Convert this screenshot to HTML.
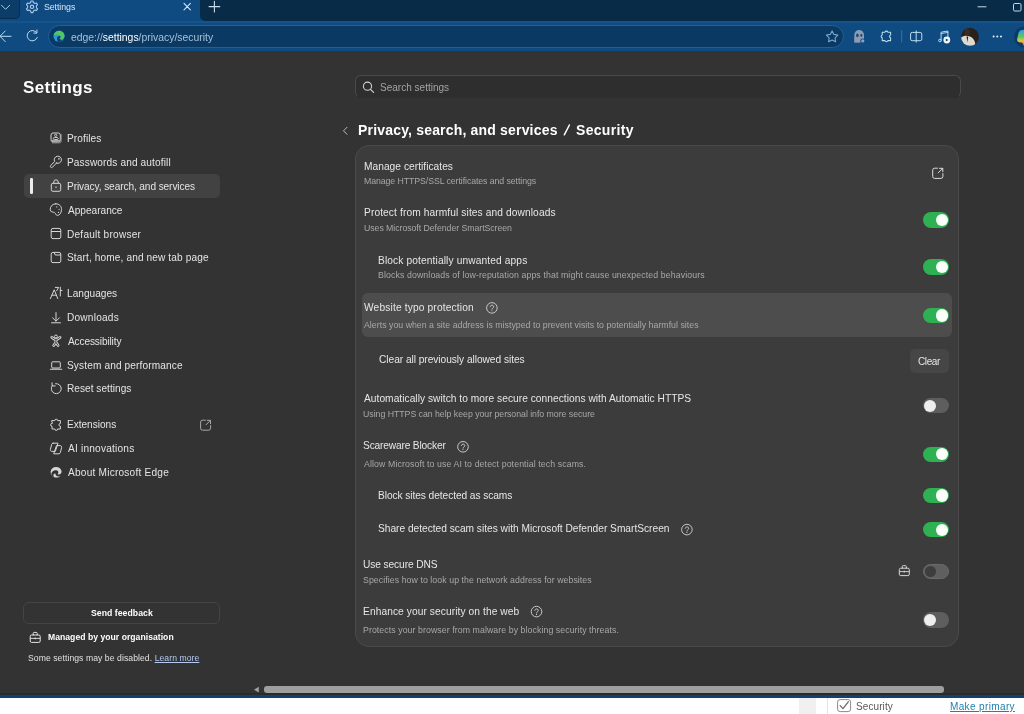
<!DOCTYPE html>
<html><head><meta charset="utf-8">
<style>
*{box-sizing:border-box;margin:0;padding:0}
html,body{width:1024px;height:714px;overflow:hidden;background:#333333;font-family:"Liberation Sans", sans-serif;position:relative}
.a{position:absolute}
.t{position:absolute;white-space:nowrap;line-height:1;will-change:transform}
svg{position:absolute;overflow:visible}
</style></head><body>
<div class="a" style="left:0px;top:0px;width:1024px;height:51px;background:#0f4a80;"></div>
<div class="a" style="left:199.5px;top:0px;width:824.5px;height:21px;background:#082c48;border-bottom-left-radius:5px"></div>
<div class="a" style="left:0px;top:0px;width:19.5px;height:19px;background:#0c3c68;border-bottom-right-radius:5px;border-right:1px solid #072c50;border-bottom:1px solid #072c50"></div>
<div class="a" style="left:0px;top:21px;width:1024px;height:1.5px;background:#15548a;"></div>
<div class="a" style="left:47.6px;top:24.6px;width:796px;height:23.2px;background:#0a3964;border-radius:12px;border:1px solid #21609a"></div>
<div class="t" style="left:43.60px;top:3px;font-size:8.8px;color:#d6e6f5;font-weight:normal;letter-spacing:-0.071px;">Settings</div>
<div class="t" style="left:71.20px;top:33px;font-size:10.4px;color:#a6c0d8;font-weight:normal;letter-spacing:0.000px;">edge://<span style="color:#fff">settings</span>/privacy/security</div>
<div class="a" style="left:0px;top:51px;width:1024px;height:644px;background:#333333;"></div>
<div class="t" style="left:22.80px;top:79px;font-size:17px;color:#ffffff;font-weight:bold;letter-spacing:0.343px;">Settings</div>
<div class="a" style="left:24px;top:174px;width:196px;height:24px;background:#424242;border-radius:5px"></div>
<div class="a" style="left:30.3px;top:178px;width:2.7px;height:15.5px;background:#ececec;border-radius:1.3px"></div>
<div class="t" style="left:66.80px;top:134px;font-size:10.1px;color:#e4e4e4;font-weight:normal;letter-spacing:0.100px;">Profiles</div>
<div class="t" style="left:66.80px;top:158px;font-size:10.1px;color:#e4e4e4;font-weight:normal;letter-spacing:0.129px;">Passwords and autofill</div>
<div class="t" style="left:66.80px;top:182px;font-size:10.1px;color:#e4e4e4;font-weight:normal;letter-spacing:-0.089px;">Privacy, search, and services</div>
<div class="t" style="left:67.80px;top:206px;font-size:10.1px;color:#e4e4e4;font-weight:normal;letter-spacing:0.000px;">Appearance</div>
<div class="t" style="left:66.80px;top:230px;font-size:10.1px;color:#e4e4e4;font-weight:normal;letter-spacing:0.229px;">Default browser</div>
<div class="t" style="left:66.80px;top:253px;font-size:10.1px;color:#e4e4e4;font-weight:normal;letter-spacing:0.125px;">Start, home, and new tab page</div>
<div class="t" style="left:66.80px;top:289px;font-size:10.1px;color:#e4e4e4;font-weight:normal;letter-spacing:0.013px;">Languages</div>
<div class="t" style="left:66.80px;top:313px;font-size:10.1px;color:#e4e4e4;font-weight:normal;letter-spacing:0.225px;">Downloads</div>
<div class="t" style="left:67.80px;top:337px;font-size:10.1px;color:#e4e4e4;font-weight:normal;letter-spacing:-0.125px;">Accessibility</div>
<div class="t" style="left:66.80px;top:361px;font-size:10.1px;color:#e4e4e4;font-weight:normal;letter-spacing:0.138px;">System and performance</div>
<div class="t" style="left:66.80px;top:384px;font-size:10.1px;color:#e4e4e4;font-weight:normal;letter-spacing:0.031px;">Reset settings</div>
<div class="t" style="left:66.80px;top:420px;font-size:10.1px;color:#e4e4e4;font-weight:normal;letter-spacing:-0.022px;">Extensions</div>
<div class="t" style="left:67.80px;top:444px;font-size:10.1px;color:#e4e4e4;font-weight:normal;letter-spacing:0.215px;">AI innovations</div>
<div class="t" style="left:67.80px;top:468px;font-size:10.1px;color:#e4e4e4;font-weight:normal;letter-spacing:0.226px;">About Microsoft Edge</div>
<div class="a" style="left:354.5px;top:75px;width:606.5px;height:23px;background:#2e2e2e;border:1px solid #4a4a4a;border-bottom-color:#2e2e2e;border-radius:6px;box-sizing:border-box"></div>
<div class="t" style="left:379.80px;top:83px;font-size:10px;color:#a3a3a3;font-weight:normal;letter-spacing:0.014px;">Search settings</div>
<div class="t" style="left:357.80px;top:123px;font-size:14px;color:#ffffff;font-weight:bold;letter-spacing:0.182px;">Privacy, search, and services</div>
<div class="t" style="left:575.60px;top:123px;font-size:14px;color:#ffffff;font-weight:bold;letter-spacing:0.314px;">Security</div>
<div class="a" style="left:355px;top:145px;width:604px;height:502px;background:#3c3c3c;border:1px solid #4b4b4b;border-radius:14px;box-sizing:border-box"></div>
<div class="a" style="left:361.5px;top:293px;width:590.5px;height:44px;background:#4d4d4d;border-radius:6px"></div>
<div class="t" style="left:363.80px;top:162px;font-size:10.2px;color:#e6e6e6;font-weight:normal;letter-spacing:0.033px;">Manage certificates</div>
<div class="t" style="left:363.80px;top:177px;font-size:8.75px;color:#a8a8a8;font-weight:normal;letter-spacing:-0.076px;">Manage HTTPS/SSL certificates and settings</div>
<div class="t" style="left:363.80px;top:208px;font-size:10.2px;color:#e6e6e6;font-weight:normal;letter-spacing:0.105px;">Protect from harmful sites and downloads</div>
<div class="t" style="left:363.80px;top:224px;font-size:8.75px;color:#a8a8a8;font-weight:normal;letter-spacing:-0.053px;">Uses Microsoft Defender SmartScreen</div>
<div class="t" style="left:378.00px;top:256px;font-size:10.2px;color:#e6e6e6;font-weight:normal;letter-spacing:0.123px;">Block potentially unwanted apps</div>
<div class="t" style="left:378.00px;top:271px;font-size:8.75px;color:#a8a8a8;font-weight:normal;letter-spacing:0.110px;">Blocks downloads of low-reputation apps that might cause unexpected behaviours</div>
<div class="t" style="left:364.20px;top:303px;font-size:10.2px;color:#e6e6e6;font-weight:normal;letter-spacing:0.155px;">Website typo protection</div>
<div class="t" style="left:364.20px;top:321px;font-size:8.75px;color:#a8a8a8;font-weight:normal;letter-spacing:0.027px;">Alerts you when a site address is mistyped to prevent visits to potentially harmful sites</div>
<div class="t" style="left:379.00px;top:355px;font-size:10.2px;color:#e6e6e6;font-weight:normal;letter-spacing:-0.048px;">Clear all previously allowed sites</div>
<div class="t" style="left:364.20px;top:394px;font-size:10.2px;color:#e6e6e6;font-weight:normal;letter-spacing:0.039px;">Automatically switch to more secure connections with Automatic HTTPS</div>
<div class="t" style="left:363.20px;top:410px;font-size:8.75px;color:#a8a8a8;font-weight:normal;letter-spacing:-0.027px;">Using HTTPS can help keep your personal info more secure</div>
<div class="t" style="left:363.20px;top:441px;font-size:10.2px;color:#e6e6e6;font-weight:normal;letter-spacing:-0.169px;">Scareware Blocker</div>
<div class="t" style="left:364.20px;top:460px;font-size:8.75px;color:#a8a8a8;font-weight:normal;letter-spacing:0.109px;">Allow Microsoft to use AI to detect potential tech scams.</div>
<div class="t" style="left:378.00px;top:491px;font-size:10.2px;color:#e6e6e6;font-weight:normal;letter-spacing:-0.075px;">Block sites detected as scams</div>
<div class="t" style="left:378.00px;top:524px;font-size:10.2px;color:#e6e6e6;font-weight:normal;letter-spacing:-0.012px;">Share detected scam sites with Microsoft Defender SmartScreen</div>
<div class="t" style="left:363.20px;top:560px;font-size:10.2px;color:#e6e6e6;font-weight:normal;letter-spacing:-0.100px;">Use secure DNS</div>
<div class="t" style="left:363.20px;top:576px;font-size:8.75px;color:#a8a8a8;font-weight:normal;letter-spacing:0.071px;">Specifies how to look up the network address for websites</div>
<div class="t" style="left:363.20px;top:607px;font-size:10.2px;color:#e6e6e6;font-weight:normal;letter-spacing:0.087px;">Enhance your security on the web</div>
<div class="t" style="left:363.20px;top:626px;font-size:8.75px;color:#a8a8a8;font-weight:normal;letter-spacing:0.078px;">Protects your browser from malware by blocking security threats.</div>
<div class="a" style="left:922.6px;top:212.4px;width:26.5px;height:15.2px;border-radius:8px;background:#2eb152"></div>
<div class="a" style="left:935.6px;top:213.7px;width:12.6px;height:12.6px;border-radius:50%;background:#fbfffb"></div>
<div class="a" style="left:922.6px;top:259.4px;width:26.5px;height:15.2px;border-radius:8px;background:#2eb152"></div>
<div class="a" style="left:935.6px;top:260.7px;width:12.6px;height:12.6px;border-radius:50%;background:#fbfffb"></div>
<div class="a" style="left:922.6px;top:307.9px;width:26.5px;height:15.2px;border-radius:8px;background:#2eb152"></div>
<div class="a" style="left:935.6px;top:309.2px;width:12.6px;height:12.6px;border-radius:50%;background:#fbfffb"></div>
<div class="a" style="left:922.6px;top:398.0px;width:26.5px;height:15.2px;border-radius:8px;background:#5e5e5e"></div>
<div class="a" style="left:924px;top:399.6px;width:12px;height:12px;border-radius:50%;background:#eeeeee"></div>
<div class="a" style="left:922.6px;top:446.59999999999997px;width:26.5px;height:15.2px;border-radius:8px;background:#2eb152"></div>
<div class="a" style="left:935.6px;top:447.9px;width:12.6px;height:12.6px;border-radius:50%;background:#fbfffb"></div>
<div class="a" style="left:922.6px;top:487.79999999999995px;width:26.5px;height:15.2px;border-radius:8px;background:#2eb152"></div>
<div class="a" style="left:935.6px;top:489.09999999999997px;width:12.6px;height:12.6px;border-radius:50%;background:#fbfffb"></div>
<div class="a" style="left:922.6px;top:522.3px;width:26.5px;height:15.2px;border-radius:8px;background:#2eb152"></div>
<div class="a" style="left:935.6px;top:523.6px;width:12.6px;height:12.6px;border-radius:50%;background:#fbfffb"></div>
<div class="a" style="left:922.6px;top:563.8px;width:26.5px;height:15.2px;border-radius:8px;background:#5f5f5f;border:1px solid #6a6a6a;box-sizing:border-box"></div>
<div class="a" style="left:924.5px;top:565.9px;width:11px;height:11px;border-radius:50%;background:#3d3d3d"></div>
<div class="a" style="left:922.6px;top:612.4px;width:26.5px;height:15.2px;border-radius:8px;background:#5e5e5e"></div>
<div class="a" style="left:924px;top:614px;width:12px;height:12px;border-radius:50%;background:#eeeeee"></div>
<div class="a" style="left:910.2px;top:348.9px;width:38.7px;height:23.8px;background:#464646;border-radius:5px"></div>
<div class="t" style="left:918.40px;top:357px;font-size:10px;color:#e6e6e6;font-weight:normal;letter-spacing:-0.400px;">Clear</div>
<div class="a" style="left:23.3px;top:601.6px;width:196.6px;height:22.6px;background:transparent;border:1px solid #444;border-radius:6px;box-sizing:border-box"></div>
<div class="t" style="left:91.40px;top:609px;font-size:8.7px;color:#ffffff;font-weight:bold;letter-spacing:0.033px;">Send feedback</div>
<div class="t" style="left:47.80px;top:633px;font-size:8.6px;color:#ffffff;font-weight:bold;letter-spacing:0.037px;">Managed by your organisation</div>
<div class="t" style="left:28.20px;top:654px;font-size:8.6px;color:#e0e0e0;font-weight:normal;letter-spacing:0.078px;">Some settings may be disabled. <span style="color:#b4c8f0;text-decoration:underline">Learn more</span></div>
<div class="a" style="left:264px;top:686.4px;width:680px;height:6.5px;background:#9f9f9f;border-radius:3px"></div>
<div class="a" style="left:0px;top:693px;width:1024px;height:2px;background:#2b2b2b;"></div>
<div class="a" style="left:0px;top:694.8px;width:1024px;height:3px;background:#0e4273;"></div>
<div class="a" style="left:0px;top:698px;width:1024px;height:16px;background:#ffffff;"></div>
<div class="a" style="left:799px;top:698px;width:17px;height:16px;background:#f0f0f0;"></div>
<div class="a" style="left:827px;top:698px;width:1px;height:16px;background:#e4e4e4;"></div>
<div class="t" style="left:855.80px;top:702px;font-size:10px;color:#5a5a5a;font-weight:normal;letter-spacing:0.100px;">Security</div>
<div class="t" style="left:950.00px;top:702px;font-size:10px;color:#1f7fae;font-weight:normal;letter-spacing:0.364px;text-decoration:underline">Make primary</div>
<svg width="1024" height="714" viewBox="0 0 1024 714" style="left:0;top:0"><path d="M1.5 5.2 L5.6 9.3 L9.7 5.2" stroke="#a9cdeb" stroke-width="1" fill="none" stroke-linecap="round" stroke-linejoin="round" /><path d="M30.67 2.50 L31.06 0.98 L32.94 0.98 L33.33 2.50 L35.06 3.50 L36.57 3.07 L37.51 4.70 L36.39 5.80 L36.39 7.80 L37.51 8.90 L36.57 10.53 L35.06 10.10 L33.33 11.10 L32.94 12.62 L31.06 12.62 L30.67 11.10 L28.94 10.10 L27.43 10.53 L26.49 8.90 L27.61 7.80 L27.61 5.80 L26.49 4.70 L27.43 3.07 L28.94 3.50 Z" stroke="#a9cdeb" stroke-width="1.1" fill="none" stroke-linejoin="round"/><circle cx="32" cy="6.8" r="1.7" stroke="#a9cdeb" stroke-width="1.1" fill="none"/><path d="M184 3.4 L190.4 9.8 M190.4 3.4 L184 9.8" stroke="#d7e8f5" stroke-width="1.1" fill="none" stroke-linecap="round" stroke-linejoin="round" /><path d="M214.4 1.2 V12 M209 6.6 H219.8" stroke="#c9d9e8" stroke-width="1.1" fill="none" stroke-linecap="round" stroke-linejoin="round" /><path d="M978 6.8 H986" stroke="#c9d9e8" stroke-width="1" fill="none" stroke-linecap="round" stroke-linejoin="round" /><rect x="1013.5" y="3.5" width="7.5" height="7.5" rx="1.2" stroke="#c9d9e8" stroke-width="1" fill="none"/><path d="M11 36.3 H0.5 M5.2 31 L0 36.3 L5.2 41.6" stroke="#bcdcf0" stroke-width="1" fill="none" stroke-linecap="round" stroke-linejoin="round" /><path d="M36.6 32.6 A5.2 5.2 0 1 0 37.3 37.5" stroke="#bcdcf0" stroke-width="1" fill="none" stroke-linecap="round" stroke-linejoin="round" /><path d="M36.9 30 V33.1 H33.8" stroke="#bcdcf0" stroke-width="1" fill="none" stroke-linecap="round" stroke-linejoin="round" /><circle cx="59" cy="36.3" r="5.5" fill="#2f95e0"/><path d="M53.6 35.4 C54.2 32.6 56.5 30.8 59.2 30.8 C62.3 30.8 64.5 33.2 64.5 35.8 C64.5 38 62.8 39.2 61.2 39.2 C60.3 39.2 59.6 38.9 59.3 38.6 C60.4 38.1 60.8 36.7 60.2 35.9 C59.2 34.6 56.3 34.2 53.6 35.4 Z" fill="#52c764"/><path d="M57 38.4 C57 36.6 58.6 35.6 60 36.1 C60.9 36.5 60.8 38 59.3 38.6 C60.2 39.8 61.5 40.4 62.6 40.4 C61.4 41.3 60.2 41.8 59 41.8 C57.8 41.8 57 40.3 57 38.4 Z" fill="#0d3f72"/><path d="M832.10 30.90 L833.92 34.39 L837.81 35.05 L835.05 37.86 L835.63 41.75 L832.10 40.00 L828.57 41.75 L829.15 37.86 L826.39 35.05 L830.28 34.39 Z" stroke="#7eaad0" stroke-width="1.05" fill="none" stroke-linejoin="round"/><path d="M854.3 42.5 V34.9 A4.85 4.85 0 0 1 864 34.9 V42.5 Z" fill="#8a9db3"/><path d="M854.3 37.5 H860 V42.5 H854.3 Z" fill="#9a96aa" opacity="0.6"/><ellipse cx="857.4" cy="35.3" rx="1.25" ry="1.9" fill="#184a78"/><ellipse cx="861.3" cy="35.2" rx="1" ry="1.5" fill="#184a78"/><circle cx="862.8" cy="40.9" r="2.5" fill="#0f4a80"/><circle cx="862.8" cy="40.9" r="1.6" fill="#86a3c4"/><path d="M882.2 32.2 H885 A1.45 1.45 0 0 1 887.8 32.2 H890.6 V35 A1.45 1.45 0 0 0 890.6 37.8 V40.6 H887.8 A1.45 1.45 0 0 1 885 40.6 H882.2 V37.8 A1.45 1.45 0 0 1 882.2 35 Z" stroke="#bcdcf0" stroke-width="1.05" fill="none" stroke-linecap="round" stroke-linejoin="round" /><path d="M901.7 30.7 V42" stroke="#3f6f9c" stroke-width="1" fill="none" stroke-linecap="round" stroke-linejoin="round" /><rect x="910.6" y="32.4" width="11.2" height="8.3" rx="1.6" stroke="#bcdcf0" stroke-width="1" fill="none"/><path d="M916.2 30.8 V42.2" stroke="#bcdcf0" stroke-width="1" fill="none" stroke-linecap="round" stroke-linejoin="round" /><path d="M941.1 40.4 V32.2 L947.9 31 V37" stroke="#bcdcf0" stroke-width="1" fill="none" stroke-linecap="round" stroke-linejoin="round" /><path d="M941.1 33.6 L947.9 32.4" stroke="#bcdcf0" stroke-width="0.9" fill="none" stroke-linecap="round" stroke-linejoin="round" /><circle cx="939.9" cy="40.5" r="1.3" stroke="#bcdcf0" stroke-width="1" fill="none"/><circle cx="946.8" cy="40" r="3.4" fill="#f4f8fb"/><path d="M945.8 38.4 L948.5 40 L945.8 41.6 Z" fill="#0f4a80"/><defs><clipPath id="av"><circle cx="970" cy="36.8" r="9"/></clipPath><linearGradient id="cp" x1="0" y1="0" x2="0" y2="1"><stop offset="0" stop-color="#2f9ee8"/><stop offset="0.45" stop-color="#5cc95a"/><stop offset="0.7" stop-color="#e8c53a"/><stop offset="1" stop-color="#f0603c"/></linearGradient></defs><g clip-path="url(#av)"><rect x="960" y="27" width="20" height="20" fill="#2b211c"/><path d="M960 38.5 C962 36.5 964.5 35.6 967 35.8 C970 36 972.5 37.5 974 40 C975 42 975.5 44 975.5 47 H960 Z" fill="#dedad0"/><ellipse cx="967.2" cy="32.3" rx="2.6" ry="3.2" fill="#3e2c22"/><path d="M966.6 36.5 L967.3 42.5 L968.2 36.5 Z" fill="#1e1a18"/></g><circle cx="993.6" cy="36.6" r="1" fill="#eef4fa"/><circle cx="997.3" cy="36.6" r="1" fill="#eef4fa"/><circle cx="1001" cy="36.6" r="1" fill="#eef4fa"/><circle cx="1024.5" cy="37" r="10.5" fill="#0b3a66"/><path d="M1024 29.8 C1021 29.8 1019 30.8 1018.4 33.6 L1017.2 38.8 C1016.8 41 1018 42.4 1020 42.4 H1021.2 C1022.3 42.4 1022.8 43.3 1023 44.4 L1023.3 45.6 H1024 Z" fill="url(#cp)"/><rect x="51" y="133" width="9.3" height="8.8" rx="2" stroke="#d6d6d6" stroke-width="1" fill="none"/><path d="M52.4 142.8 H59.4 A1.7 1.7 0 0 0 61.1 141.1 V134.6" stroke="#a0a0a0" stroke-width="1" fill="none" stroke-linecap="round" stroke-linejoin="round" /><circle cx="55.7" cy="135.4" r="1.1" stroke="#d6d6d6" stroke-width="0.9" fill="none"/><rect x="53.3" y="137.5" width="4.9" height="2" rx="1" stroke="#d6d6d6" stroke-width="0.9" fill="none"/><path d="M52.2 140.4 H59.2" stroke="#d6d6d6" stroke-width="0.8" fill="none" stroke-linecap="round" stroke-linejoin="round" /><path d="M56.39 163.09 L52.47 167.23 A1.2 1.2 0 0 1 50.73 165.57 L54.64 161.44 A3.6 3.6 0 1 1 56.39 163.09 Z" stroke="#d6d6d6" stroke-width="1" fill="none" stroke-linecap="round" stroke-linejoin="round" /><circle cx="58.9" cy="158.9" r="0.8" stroke="none" stroke-width="0" fill="#d6d6d6"/><rect x="51.3" y="183.3" width="9.4" height="8" rx="1.6" stroke="#d6d6d6" stroke-width="1" fill="none"/><path d="M53.8 183.3 V182 A2.2 2.2 0 0 1 58.2 182 V183.3" stroke="#d6d6d6" stroke-width="1" fill="none" stroke-linecap="round" stroke-linejoin="round" /><circle cx="56" cy="187.3" r="0.7" stroke="none" stroke-width="0" fill="#d6d6d6"/><path d="M55.8 203.8 C59.6 203.8 61.5 206.3 61.5 209.4 C61.5 213 59.5 215.4 57.4 215.4 C55.6 215.4 55.8 213.3 54.6 212.6 C53.4 211.8 50.2 212.5 50.2 209.6 C50.2 206.3 52.5 203.8 55.8 203.8 Z" stroke="#d6d6d6" stroke-width="1" fill="none" stroke-linecap="round" stroke-linejoin="round" /><circle cx="56.8" cy="206.9" r="0.6" stroke="none" stroke-width="0" fill="#d6d6d6"/><circle cx="59.1" cy="209.3" r="0.6" stroke="none" stroke-width="0" fill="#d6d6d6"/><circle cx="58.4" cy="212.4" r="0.6" stroke="none" stroke-width="0" fill="#d6d6d6"/><rect x="51.2" y="228.4" width="9.6" height="10.2" rx="1.8" stroke="#d6d6d6" stroke-width="1" fill="none"/><path d="M51.4 231.5 H60.6" stroke="#d6d6d6" stroke-width="1" fill="none" stroke-linecap="round" stroke-linejoin="round" /><rect x="51.2" y="252.4" width="9.6" height="10.2" rx="1.8" stroke="#d6d6d6" stroke-width="1" fill="none"/><path d="M54.2 252.6 L55.2 255 H60.6" stroke="#d6d6d6" stroke-width="1" fill="none" stroke-linecap="round" stroke-linejoin="round" /><path d="M50.4 298.6 L54.2 289.8 L57.8 298.6 M51.9 295.2 H56.4" stroke="#d6d6d6" stroke-width="1" fill="none" stroke-linecap="round" stroke-linejoin="round" /><path d="M55.3 287.4 H58.6 L56.7 290.8 M60.3 287.2 V296 M60.4 290.5 H62" stroke="#d6d6d6" stroke-width="1" fill="none" stroke-linecap="round" stroke-linejoin="round" /><path d="M56 312.6 V321 M52.6 317.8 L56 321.2 L59.4 317.8 M51.5 322.8 H60.5" stroke="#d6d6d6" stroke-width="1" fill="none" stroke-linecap="round" stroke-linejoin="round" /><path d="M51.8 337.3 L54.6 339.3 H57.2 L60.1 337.3 M55.9 339.3 V342.2 M55.9 342.2 L53.7 345.5 M55.9 342.2 L58.1 345.5" stroke="#d6d6d6" stroke-width="2.7" fill="none" stroke-linecap="round" stroke-linejoin="round" /><path d="M51.8 337.3 L54.6 339.3 H57.2 L60.1 337.3 M55.9 339.6 V342.0 M55.7 342.6 L53.7 345.5 M56.1 342.6 L58.1 345.5" stroke="#323232" stroke-width="0.9" fill="none" stroke-linecap="round" stroke-linejoin="round" /><circle cx="55.9" cy="336.5" r="1.5" stroke="#d6d6d6" stroke-width="1" fill="none"/><rect x="51.7" y="361.8" width="8.6" height="6.2" rx="1" stroke="#d6d6d6" stroke-width="1" fill="none"/><path d="M50.3 369.3 H61.7" stroke="#d6d6d6" stroke-width="1.1" fill="none" stroke-linecap="round" stroke-linejoin="round" /><path d="M55.6 383.65 A5 5 0 1 1 52.3 385.5" stroke="#d6d6d6" stroke-width="1" fill="none" stroke-linecap="round" stroke-linejoin="round" /><path d="M52.0 382.8 L52.2 385.9 L55.2 386.0" stroke="#d6d6d6" stroke-width="1" fill="none" stroke-linecap="round" stroke-linejoin="round" /><path d="M52 420.6 H54.8 A1.4 1.4 0 0 1 57.6 420.6 H60.4 V423.4 A1.4 1.4 0 0 0 60.4 426.2 V429 H57.6 A1.4 1.4 0 0 1 54.8 429 H52 V426.2 A1.4 1.4 0 0 1 52 423.4 Z" stroke="#d6d6d6" stroke-width="1" fill="none" stroke-linecap="round" stroke-linejoin="round" /><path d="M53 443.2 H58 L55.3 451.4 H51.9 C50.7 451.4 50.2 450.5 50.4 449.4 L51.6 444.6 C51.8 443.8 52.3 443.2 53 443.2 Z" stroke="#d6d6d6" stroke-width="1" fill="none" stroke-linecap="round" stroke-linejoin="round" /><path d="M56.9 445.6 H60.1 C61.3 445.6 61.8 446.5 61.6 447.6 L60.4 452.4 C60.2 453.2 59.7 453.8 59 453.8 H54.1 Z" stroke="#d6d6d6" stroke-width="1" fill="none" stroke-linecap="round" stroke-linejoin="round" /><path d="M50.6 471.5 A5.6 5.6 0 0 1 61.6 471.6 C61.6 474 59.3 475 57.6 474.2 C59 473 58.4 470.6 56.4 470.3 C53.8 469.9 52 471.3 51.4 473.5 C51.6 476 53.5 477.4 55.5 477.4 A5.6 5.6 0 0 1 50.6 471.5 Z" fill="#d6d6d6"/><path d="M55.2 473.2 C55.5 475.5 57.5 477.3 60.5 476.3 A5.6 5.6 0 0 1 55.5 477.4 C53 476.8 52.5 474 55.2 473.2 Z" fill="#d6d6d6"/><path d="M205.30 420.2 H202.50 A1.90 1.90 0 0 0 200.6 422.10 V428.30 A1.90 1.90 0 0 0 202.50 430.2 H208.70 A1.90 1.90 0 0 0 210.6 428.30 V425.50" stroke="#a8a8a8" stroke-width="1" fill="none" stroke-linecap="round" stroke-linejoin="round" /><path d="M206.00 424.80 L210.40 420.40 M207.20 420.30 H210.50 V423.60" stroke="#a8a8a8" stroke-width="1" fill="none" stroke-linecap="round" stroke-linejoin="round" /><path d="M937.49 168.2 H934.64 A1.94 1.94 0 0 0 932.7 170.14 V176.46 A1.94 1.94 0 0 0 934.64 178.39999999999998 H940.96 A1.94 1.94 0 0 0 942.9000000000001 176.46 V173.61" stroke="#dcdcdc" stroke-width="1" fill="none" stroke-linecap="round" stroke-linejoin="round" /><path d="M938.21 172.89 L942.70 168.40 M939.43 168.30 H942.80 V171.67" stroke="#dcdcdc" stroke-width="1" fill="none" stroke-linecap="round" stroke-linejoin="round" /><circle cx="367.5" cy="86.2" r="4.1" stroke="#d0d0d0" stroke-width="1.1" fill="none"/><path d="M370.5 89.3 L373.6 92.4" stroke="#d0d0d0" stroke-width="1.2" fill="none" stroke-linecap="round" stroke-linejoin="round" /><path d="M564.3 134.8 L569.4 125.0" stroke="#ffffff" stroke-width="1.5" fill="none" stroke-linecap="round" stroke-linejoin="round" /><path d="M347 127.3 L343.5 130.8 L347 134.3" stroke="#bdbdbd" stroke-width="1" fill="none" stroke-linecap="round" stroke-linejoin="round" /><circle cx="491.9" cy="307.9" r="5.3" stroke="#cfcfcf" stroke-width="0.95" fill="none"/><path d="M490.2 306.59999999999997 C490.2 304.7 493.7 304.7 493.7 306.7 C493.7 308.09999999999997 491.9 308.09999999999997 491.9 309.2" stroke="#d0d0d0" stroke-width="0.95" fill="none" stroke-linecap="round" stroke-linejoin="round" /><circle cx="491.9" cy="310.7" r="0.55" stroke="none" stroke-width="0" fill="#d0d0d0"/><circle cx="463" cy="446.8" r="5.3" stroke="#cfcfcf" stroke-width="0.95" fill="none"/><path d="M461.3 445.5 C461.3 443.6 464.8 443.6 464.8 445.6 C464.8 447.0 463 447.0 463 448.1" stroke="#d0d0d0" stroke-width="0.95" fill="none" stroke-linecap="round" stroke-linejoin="round" /><circle cx="463" cy="449.6" r="0.55" stroke="none" stroke-width="0" fill="#d0d0d0"/><circle cx="686.9" cy="529.6" r="5.3" stroke="#cfcfcf" stroke-width="0.95" fill="none"/><path d="M685.1999999999999 528.3000000000001 C685.1999999999999 526.4 688.6999999999999 526.4 688.6999999999999 528.4 C688.6999999999999 529.8000000000001 686.9 529.8000000000001 686.9 530.9" stroke="#d0d0d0" stroke-width="0.95" fill="none" stroke-linecap="round" stroke-linejoin="round" /><circle cx="686.9" cy="532.4" r="0.55" stroke="none" stroke-width="0" fill="#d0d0d0"/><circle cx="536.5" cy="611.6" r="5.3" stroke="#cfcfcf" stroke-width="0.95" fill="none"/><path d="M534.8 610.3000000000001 C534.8 608.4 538.3 608.4 538.3 610.4 C538.3 611.8000000000001 536.5 611.8000000000001 536.5 612.9" stroke="#d0d0d0" stroke-width="0.95" fill="none" stroke-linecap="round" stroke-linejoin="round" /><circle cx="536.5" cy="614.4" r="0.55" stroke="none" stroke-width="0" fill="#d0d0d0"/><rect x="899.3" y="568.1999999999999" width="10" height="7.4" rx="1.4" stroke="#d6d6d6" stroke-width="1" fill="none"/><path d="M902.3 568.1999999999999 V566.5999999999999 A1 1 0 0 1 903.3 565.5999999999999 H905.3 A1 1 0 0 1 906.3 566.5999999999999 V568.1999999999999" stroke="#d6d6d6" stroke-width="1" fill="none" stroke-linecap="round" stroke-linejoin="round" /><path d="M899.5999999999999 571.5999999999999 H909.0" stroke="#d6d6d6" stroke-width="0.9" fill="none" stroke-linecap="round" stroke-linejoin="round" /><rect x="903.6999999999999" y="570.8" width="1.3" height="1.6" fill="#d6d6d6"/><rect x="30.2" y="635.0" width="10" height="7.4" rx="1.4" stroke="#e6e6e6" stroke-width="1" fill="none"/><path d="M33.2 635.0 V633.4 A1 1 0 0 1 34.2 632.4 H36.2 A1 1 0 0 1 37.2 633.4 V635.0" stroke="#e6e6e6" stroke-width="1" fill="none" stroke-linecap="round" stroke-linejoin="round" /><path d="M30.5 638.4 H39.9" stroke="#e6e6e6" stroke-width="0.9" fill="none" stroke-linecap="round" stroke-linejoin="round" /><rect x="34.6" y="637.6" width="1.3" height="1.6" fill="#e6e6e6"/><path d="M254 689.7 L258.8 686.8 V692.6 Z" fill="#a0a0a0"/><rect x="837.6" y="699.6" width="13" height="12" rx="2.5" stroke="#8a8a8a" stroke-width="1" fill="#fff"/><path d="M840.2 705.6 L843 708.6 L848.3 701.8" stroke="#6a6a6a" stroke-width="1.3" fill="none" stroke-linecap="round" stroke-linejoin="round" /></svg>
</body></html>
